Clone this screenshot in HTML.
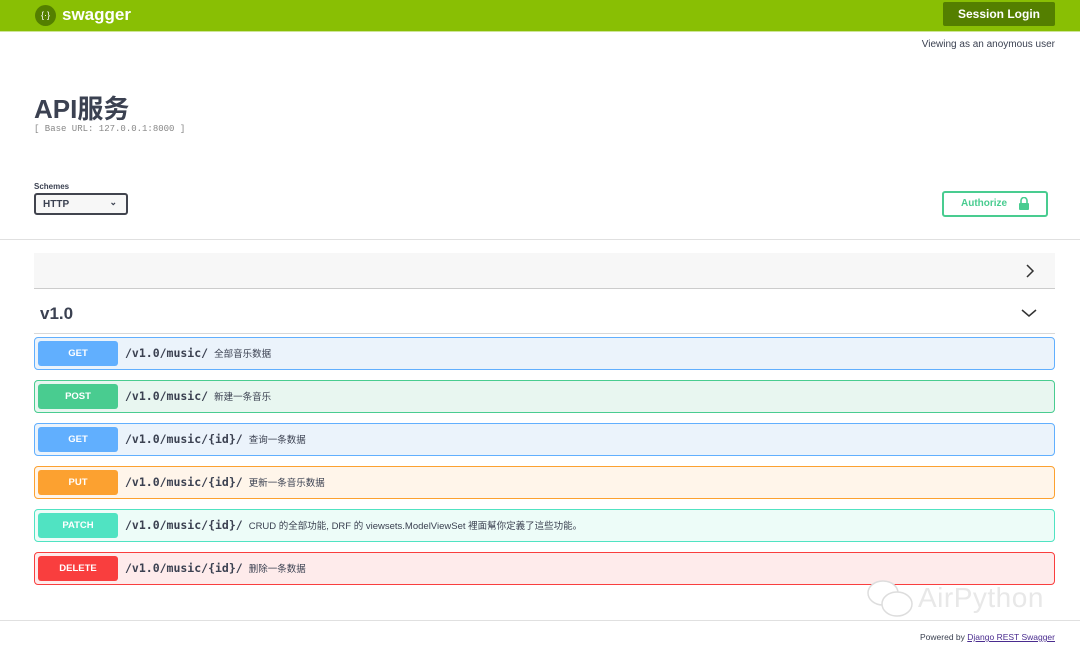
<!DOCTYPE html>
<html><head><meta charset="utf-8"><style>
*{box-sizing:border-box;margin:0;padding:0}
body{width:1080px;height:651px;overflow:hidden;background:#fff;font-family:"Liberation Sans","Noto Sans CJK SC",sans-serif;color:#3b4151;position:relative}
.top{position:absolute;left:0;top:0;width:1080px;height:32px;background:#89bf04;border-bottom:1px solid #cde59a}
.logo{position:absolute;left:35px;top:5px;width:21px;height:21px;border-radius:50%;background:#547f00;color:#fff;font-size:9px;text-align:center;line-height:21px}
.brand{position:absolute;left:62px;top:5px;color:#fff;font-weight:bold;font-size:17px}
.login{position:absolute;left:943px;top:2px;width:112px;height:24px;background:#547f00;border-radius:2px;color:#fff;font-weight:bold;font-size:12px;text-align:center;line-height:24px}
.view{position:absolute;right:25px;top:39px;font-size:10px}
h1{position:absolute;left:34px;top:89px;font-size:26px;font-weight:bold}
.base{position:absolute;left:34px;top:124px;font-family:"Liberation Mono",monospace;font-size:9px;color:#888}
.sch{position:absolute;left:34px;top:182px;font-size:8px;font-weight:bold}
.sel{position:absolute;left:34px;top:193px;width:94px;height:22px;border:2px solid #41444e;border-radius:3px;background:#f7f7f7;font-size:10px;font-weight:bold;padding:4px 7px}
.auth{position:absolute;left:942px;top:191px;width:106px;height:26px;border:2px solid #49cc90;border-radius:3px;color:#49cc90;font-weight:bold;font-size:10px;line-height:22px;padding-left:17px}
.hr{position:absolute;left:0;width:1080px;height:1px;background:#e0e0e0}
.sec{position:absolute;left:34px;top:253px;width:1021px;height:36px;background:#f7f7f7;border-bottom:1px solid #ccc}
.v{position:absolute;left:40px;top:304px;font-size:17px;font-weight:bold}
.op{position:absolute;left:34px;width:1021px;height:33px;border:1px solid;border-radius:4px}
.b{position:absolute;left:3px;top:3px;width:80px;height:25px;border-radius:3px;color:#fff;font-weight:bold;font-size:9.5px;text-align:center;line-height:25px}
.p{position:absolute;left:90px;top:8px;font-family:"DejaVu Sans Mono",monospace;font-weight:bold;font-size:11.5px;color:#3b4151}
.d{font-family:"Liberation Sans","Noto Sans CJK SC",sans-serif;font-weight:normal;font-size:9.5px;margin-left:6px}
.foot{position:absolute;right:25px;top:632px;font-size:8.5px}
.foot a{color:#4a2c8f;text-decoration:underline}
.wm{position:absolute;left:918px;top:582px;font-size:28px;color:#e8e8e8;letter-spacing:.5px}
</style></head><body>
<div class="top"><div class="logo">{·}</div><div class="brand">swagger</div><div class="login">Session Login</div></div>
<div class="view">Viewing as an anoymous user</div>
<h1>API服务</h1>
<div class="base">[ Base URL: 127.0.0.1:8000 ]</div>
<div class="sch">Schemes</div>
<div class="sel">HTTP<span style="position:absolute;right:9px;top:2px;font-size:9px">⌄</span></div>
<div class="auth">Authorize<svg style="position:absolute;right:17px;top:4px" width="10" height="13" viewBox="0 0 10 13"><path d="M2 6V3.5a3 3 0 0 1 6 0V6" fill="none" stroke="#49cc90" stroke-width="1.6"/><rect x="0" y="6" width="10" height="7" rx="1" fill="#49cc90"/></svg></div>
<div class="hr" style="top:239px"></div>
<div class="sec"><svg style="position:absolute;right:20px;top:10px" width="10" height="16"><path d="M2 2l6 6-6 6" fill="none" stroke="#333" stroke-width="1.5"/></svg></div>
<div class="v">v1.0</div>
<svg style="position:absolute;left:1021px;top:308px" width="16" height="10"><path d="M1 2l7 6 7-6" fill="none" stroke="#333" stroke-width="1.5"/></svg>
<div class="hr" style="top:333px;left:34px;width:1021px;background:#d8d8d8"></div>
<div class="op" style="top:337px;background:#ebf3fb;border-color:#61affe"><div class="b" style="background:#61affe">GET</div><div class="p">/v1.0/music/<span class="d">全部音乐数据</span></div></div>
<div class="op" style="top:380px;background:#e8f6f0;border-color:#49cc90"><div class="b" style="background:#49cc90">POST</div><div class="p">/v1.0/music/<span class="d">新建一条音乐</span></div></div>
<div class="op" style="top:423px;background:#ebf3fb;border-color:#61affe"><div class="b" style="background:#61affe">GET</div><div class="p">/v1.0/music/{id}/<span class="d">查询一条数据</span></div></div>
<div class="op" style="top:466px;background:#fff5ea;border-color:#fca130"><div class="b" style="background:#fca130">PUT</div><div class="p">/v1.0/music/{id}/<span class="d">更新一条音乐数据</span></div></div>
<div class="op" style="top:509px;background:#edfcf8;border-color:#50e3c2"><div class="b" style="background:#50e3c2">PATCH</div><div class="p">/v1.0/music/{id}/<span class="d">CRUD 的全部功能, DRF 的 viewsets.ModelViewSet 裡面幫你定義了這些功能。</span></div></div>
<div class="op" style="top:552px;background:#feebeb;border-color:#f93e3e"><div class="b" style="background:#f93e3e">DELETE</div><div class="p">/v1.0/music/{id}/<span class="d">删除一条数据</span></div></div>
<div class="wm">AirPython</div>
<svg style="position:absolute;left:866px;top:578px" width="50" height="42"><ellipse cx="17" cy="15" rx="15" ry="12" fill="#fff" stroke="#ddd" stroke-width="1.5"/><ellipse cx="31" cy="26" rx="15" ry="12" fill="#fff" stroke="#ddd" stroke-width="1.5"/></svg>
<div class="hr" style="top:620px"></div>
<div class="foot">Powered by <a>Django REST Swagger</a></div>
</body></html>
